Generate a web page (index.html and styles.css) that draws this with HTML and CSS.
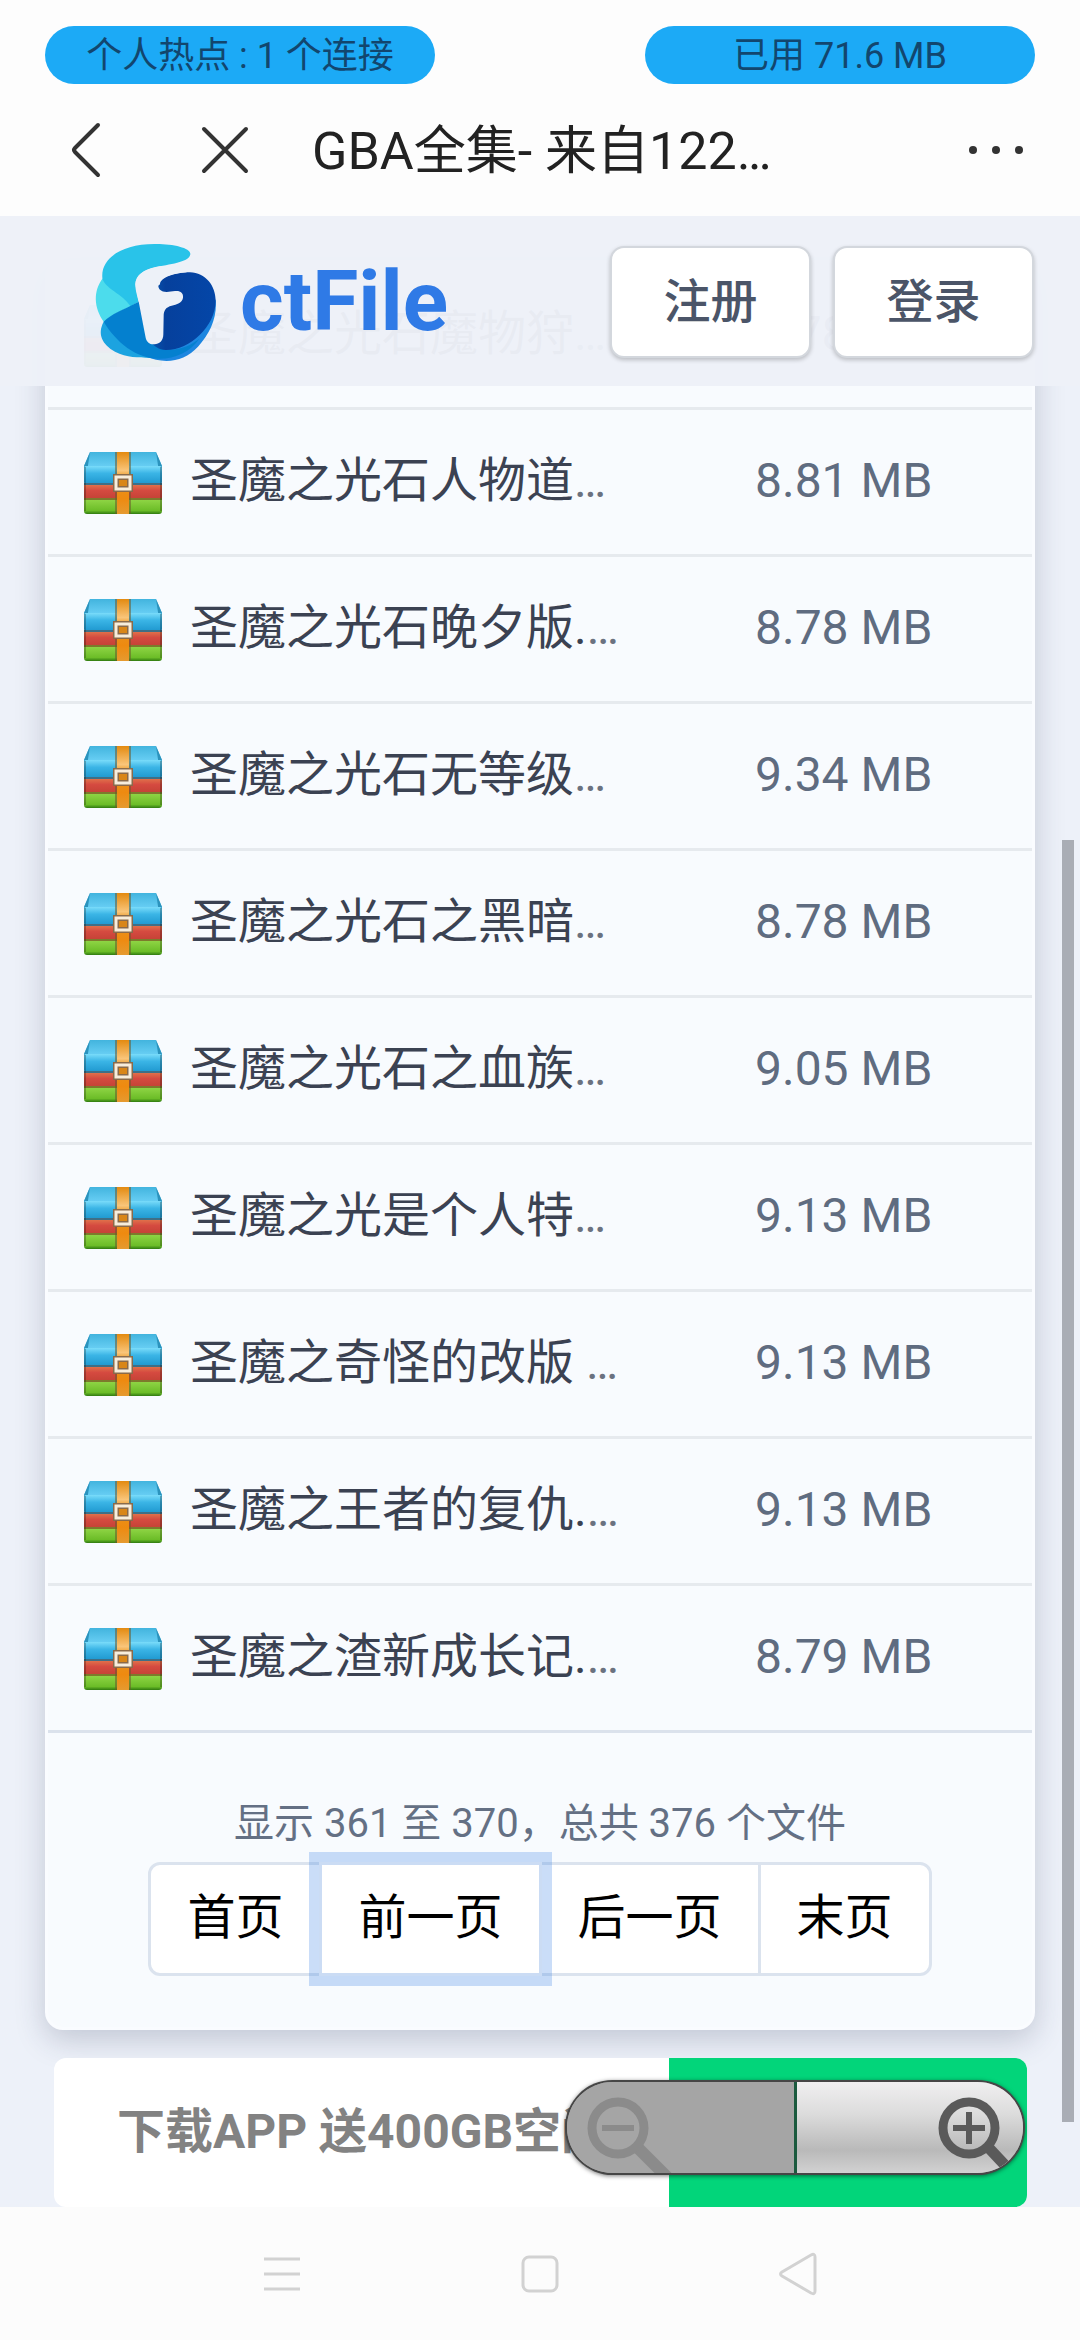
FILE: index.html
```html
<!DOCTYPE html>
<html lang="zh-CN">
<head>
    <meta charset="UTF-8">
    <meta name="viewport" content="width=device-width, initial-scale=1.0">
    <title>GBA全集</title>
    <link rel="stylesheet" href="styles.css">
</head>
<body>
    <!-- shared drawings -->
    <svg class="defs" width="0" height="0" aria-hidden="true">
        <defs>
            <linearGradient id="lid" x1="0" y1="0" x2="0" y2="1">
                <stop offset="0" stop-color="#42b4de"/>
                <stop offset="1" stop-color="#66cdf3"/>
            </linearGradient>
            <linearGradient id="blue" x1="0" y1="0" x2="0" y2="1">
                <stop offset="0" stop-color="#7adcfa"/>
                <stop offset="0.4" stop-color="#3bb5e6"/>
                <stop offset="1" stop-color="#1f98cf"/>
            </linearGradient>
            <linearGradient id="red" x1="0" y1="0" x2="0" y2="1">
                <stop offset="0" stop-color="#e0704a"/>
                <stop offset="0.4" stop-color="#d54a40"/>
                <stop offset="1" stop-color="#c44236"/>
            </linearGradient>
            <linearGradient id="green" x1="0" y1="0" x2="0" y2="1">
                <stop offset="0" stop-color="#8ed444"/>
                <stop offset="0.75" stop-color="#6cbd28"/>
                <stop offset="1" stop-color="#2f7a10"/>
            </linearGradient>
            <linearGradient id="strap" x1="0" y1="0" x2="0" y2="1">
                <stop offset="0" stop-color="#e38a10"/>
                <stop offset="0.3" stop-color="#f9c57a"/>
                <stop offset="0.42" stop-color="#e8941f"/>
                <stop offset="0.75" stop-color="#ee8a10"/>
                <stop offset="1" stop-color="#e59a30"/>
            </linearGradient>
        </defs>
        <symbol id="archive" viewBox="0 0 78 64">
            <path d="M6 1h66l6 14H0z" fill="url(#lid)"/>
            <path d="M6 1 0 15v6h3zM72 1l6 14v6h-3z" fill="#2b93bd"/>
            <rect y="15" width="78" height="18" rx="2" fill="url(#blue)"/>
            <rect y="32" width="78" height="2" fill="#3f6f86"/>
            <rect y="34" width="78" height="14" fill="url(#red)"/>
            <rect y="47" width="78" height="2" fill="#7d7a2c"/>
            <path d="M0 49h78v11q0 3-3 3H3q-3 0-3-3z" fill="url(#green)"/>
            <path d="M1 16v44M77 16v44" stroke="#000" stroke-opacity=".25" stroke-width="2"/>
            <rect x="31" y="1" width="16" height="62" fill="#6b5a2c" opacity=".55"/>
            <rect x="33" y="1" width="12" height="62" fill="url(#strap)"/>
            <rect x="32" y="26" width="14" height="12" fill="#d98618" stroke="#8a6a4a" stroke-width="6"/>
            <rect x="32" y="26" width="14" height="12" fill="none" stroke="#f7eddc" stroke-width="3"/>
        </symbol>
    </svg>

    <div class="status-bar">
        <span class="pill">个人热点 : 1 个连接</span>
        <span class="pill">已用 71.6 MB</span>
    </div>

    <div class="title-bar">
        <button class="icon-btn" type="button" aria-label="返回">
            <svg width="56" height="56" viewBox="0 0 56 56"><path d="M40 3 17 26q-2 2 0 4l23 23"/></svg>
        </button>
        <button class="icon-btn close" type="button" aria-label="关闭">
            <svg width="48" height="48" viewBox="0 0 48 48"><path d="M3 3l42 42M45 3 3 45"/></svg>
        </button>
        <h1>GBA全集- 来自122…</h1>
        <button class="icon-btn more" type="button" aria-label="更多">
            <svg width="56" height="12" viewBox="0 0 56 12"><circle cx="5" cy="6" r="4"/><circle cx="28" cy="6" r="4"/><circle cx="51" cy="6" r="4"/></svg>
        </button>
    </div>

    <main class="page">
        <header class="site-header">
            <a class="brand" href="#">
                <svg width="128" height="122" viewBox="96 60 384 366" aria-hidden="true">
                    <defs>
                        <linearGradient id="dark" x1="0" x2="1">
                            <stop offset="0" stop-color="#0767bd"/>
                            <stop offset="0.35" stop-color="#06409c"/>
                            <stop offset="1" stop-color="#0446a8"/>
                        </linearGradient>
                    </defs>
                    <path fill="#4cdcec" d="M128 172c-28 38-28 86 4 132 24-22 52-36 84-49l4-30z"/>
                    <path fill="#29c3e9" d="M127 170C122 110 190 67 290 69c50 0 102 12 101 30-1 22-51 30-101 38-42 8-64 28-64 53l10 52-24 14c-24-38-80-54-85-86z"/>
                    <path fill="#1ca3e0" d="M131 302c-20 38-4 68 34 90 36 18 70 17 105 19l20-40z"/>
                    <path fill="#1d86e0" d="M256 405c56 26 116 18 158-28 36-40 58-86 53-142l-60 70-120 60z"/>
                    <path fill="#0480cf" d="M131 302c22-24 60-36 105-60l90 143c40 2 68-14 92-32-26 38-70 60-120 60-70 0-130-50-167-111z"/>
                    <path fill="url(#dark)" d="M236 240l64-50c0-20 46-36 90-36 46 1 78 40 77 88-2 74-77 146-150 145-40-4-62-28-81-147z"/>
                    <path fill="#edf1f8" d="M226 190c2-30 30-46 74-54l60-2 20 20c-40 2-82 14-85 40 0 10 8 18 25 19l25-3c15-2 26 5 24 20s-19 20-34 24c-17 4-24 14-24 31l-1 55c0 20-12 29-27 30s-23-8-26-20l-21-108c-6-24-10-36-10-52z"/>
                </svg>
                <span>ctFile</span>
            </a>
            <nav class="account">
                <button type="button">注册</button>
                <button type="button">登录</button>
            </nav>
        </header>

        <section class="card">
            <table class="files">
                <tbody>
                    <tr><td class="ico"><svg><use href="#archive"/></svg></td><td class="name">圣魔之光石魔物狩<i>…</i></td><td class="size">8.78 MB</td></tr>
                    <tr><td class="ico"><svg><use href="#archive"/></svg></td><td class="name">圣魔之光石人物道<i>…</i></td><td class="size">8.81 MB</td></tr>
                    <tr><td class="ico"><svg><use href="#archive"/></svg></td><td class="name">圣魔之光石晚夕版.<i>…</i></td><td class="size">8.78 MB</td></tr>
                    <tr><td class="ico"><svg><use href="#archive"/></svg></td><td class="name">圣魔之光石无等级<i>…</i></td><td class="size">9.34 MB</td></tr>
                    <tr><td class="ico"><svg><use href="#archive"/></svg></td><td class="name">圣魔之光石之黑暗<i>…</i></td><td class="size">8.78 MB</td></tr>
                    <tr><td class="ico"><svg><use href="#archive"/></svg></td><td class="name">圣魔之光石之血族<i>…</i></td><td class="size">9.05 MB</td></tr>
                    <tr><td class="ico"><svg><use href="#archive"/></svg></td><td class="name">圣魔之光是个人特<i>…</i></td><td class="size">9.13 MB</td></tr>
                    <tr><td class="ico"><svg><use href="#archive"/></svg></td><td class="name">圣魔之奇怪的改版 <i>…</i></td><td class="size">9.13 MB</td></tr>
                    <tr><td class="ico"><svg><use href="#archive"/></svg></td><td class="name">圣魔之王者的复仇.<i>…</i></td><td class="size">9.13 MB</td></tr>
                    <tr><td class="ico"><svg><use href="#archive"/></svg></td><td class="name">圣魔之渣新成长记.<i>…</i></td><td class="size">8.79 MB</td></tr>
                </tbody>
            </table>
            <p class="info">显示 361 至 370，总共 376 个文件</p>
            <nav class="pagination">
                <button type="button">首页</button>
                <button type="button" class="focused">前一页</button>
                <button type="button">后一页</button>
                <button type="button">末页</button>
            </nav>
        </section>

        <section class="banner">
            <a class="banner-text" href="#">下载APP 送400GB空间</a>
            <div class="banner-action"></div>
            <div class="zoom">
                <button class="zoom-out" type="button" aria-label="缩小" disabled>
                    <svg width="110" height="91" viewBox="0 0 110 91">
                        <path d="M68 63l32 32" stroke-width="12"/>
                        <circle cx="51" cy="46" r="26" stroke-width="9"/>
                        <path d="M35 46h32" stroke-width="6"/>
                    </svg>
                </button>
                <button class="zoom-in" type="button" aria-label="放大">
                    <svg width="92" height="91" viewBox="0 0 92 91">
                        <path d="M56 64l30 32" stroke-width="11"/>
                        <circle cx="38" cy="46" r="26" stroke-width="9"/>
                        <path d="M22 46h32M38 30v32" stroke-width="6"/>
                    </svg>
                </button>
            </div>
        </section>
        <div class="scroll-thumb"></div>
    </main>

    <nav class="nav-bar">
        <button type="button" aria-label="菜单"><svg width="44" height="44" viewBox="0 0 44 44"><path d="M4 7h36M4 22h36M4 37h36"/></svg></button>
        <button type="button" aria-label="主页"><svg width="44" height="44" viewBox="0 0 44 44"><rect x="5" y="5" width="34" height="34" rx="6"/></svg></button>
        <button type="button" aria-label="后退"><svg width="44" height="44" viewBox="0 0 44 44"><path d="M35 3q4-2 4 2v34q0 4-4 2L6 24q-3-2 0-4z"/></svg></button>
    </nav>
</body>
</html>
```
FILE: styles.css
```css
* {
  box-sizing: border-box;
}

body {
  margin: 0;
  font-family: Roboto, "Noto Sans CJK SC", sans-serif;
  background: #fdfdfd;
  min-height: 100vh;
  display: flex;
  flex-direction: column;
}

button {
  font-family: inherit;
  cursor: pointer;
}

.defs {
  position: absolute;
}

/* phone status bar */
.status-bar {
  display: flex;
  justify-content: space-between;
  padding: 26px 45px 0;
}

.pill {
  width: 390px;
  height: 58px;
  border-radius: 29px;
  background: #1caaf6;
  color: #12466e;
  font-size: 36px;
  line-height: 60px;
  text-align: center;
}

/* title bar */
.title-bar {
  display: flex;
  align-items: center;
  height: 132px;
  padding: 0 56px 0 58px;
}

.title-bar h1 {
  flex: 1;
  margin: 0 0 0 63px;
  padding-top: 4px;
  font-size: 52px;
  line-height: 64px;
  font-weight: 400;
  color: #222;
}

.icon-btn {
  display: flex;
  padding: 0;
  border: none;
  background: none;
}

.icon-btn svg {
  fill: none;
  stroke: #333;
  stroke-width: 4;
  stroke-linecap: round;
}

.close {
  margin-left: 87px;
}

.more svg {
  fill: #333;
  stroke: none;
}

/* web page */
.page {
  position: relative;
  flex: 1;
  background: #edf1f9;
  overflow: hidden;
}

.site-header {
  position: relative;
  z-index: 2;
  display: flex;
  align-items: center;
  justify-content: space-between;
  height: 170px;
  padding: 2px 46px 0 92px;
  background: rgba(237, 241, 248, 0.97);
}

.brand {
  display: flex;
  align-items: center;
  gap: 20px;
  color: #2f7ae6;
  font-size: 84px;
  line-height: 100px;
  font-weight: 700;
  text-decoration: none;
}

.account {
  display: flex;
  gap: 22px;
}

.account button {
  width: 201px;
  height: 112px;
  border: 2px solid #d3d7dd;
  border-radius: 14px;
  background: #fff;
  color: #4b5568;
  font-size: 47px;
  line-height: 56px;
  font-weight: 500;
  box-shadow: 0 2px 4px rgba(0, 0, 0, 0.22);
}

.card {
  margin: -126px 45px 0;
  padding-bottom: 51px;
  border: 3px solid #fafcff;
  border-radius: 18px;
  background: #f8fbfe;
  box-shadow: 0 10px 30px rgba(40, 50, 80, 0.22);
}

.files {
  width: 100%;
  border-spacing: 0;
}

.files td {
  height: 147px;
  padding: 0;
  border-bottom: 3px solid #e6eaee;
  font-size: 48px;
  line-height: 56px;
}

.files tr:last-child td {
  border-bottom-color: #dbe2ec;
}

.files .ico {
  width: 142px;
  padding: 2px 0 0 36px;
}

.ico svg {
  display: block;
  width: 78px;
  height: 64px;
}

.files .name {
  padding-bottom: 2px;
  color: #3b4252;
  white-space: nowrap;
}

.name i {
  font-style: normal;
  color: #6b7280;
}

.files .size {
  width: 277px;
  padding-bottom: 2px;
  color: #5f6c80;
  white-space: nowrap;
}

.info {
  margin: 67px 0 14px;
  font-size: 40px;
  line-height: 48px;
  color: #647084;
  text-align: center;
}

.pagination {
  display: flex;
  justify-content: center;
}

.pagination button {
  height: 114px;
  margin-left: -3px;
  padding: 0 36px 2px;
  border: 3px solid #dbe3ee;
  background: #fff;
  color: #000;
  font-size: 48px;
  line-height: 56px;
}

.pagination button:first-child {
  margin-left: 0;
  border-radius: 12px 0 0 12px;
}

.pagination button:last-child {
  border-radius: 0 12px 12px 0;
}

.pagination .focused {
  position: relative;
  z-index: 1;
  border-color: #cbdcf4;
  box-shadow: 0 0 0 10px rgba(66, 133, 230, 0.28);
}

/* app banner */
.banner {
  position: relative;
  display: flex;
  height: 149px;
  margin: 28px 53px 0 54px;
  border-radius: 12px;
  background: #fff;
}

.banner-text {
  flex: 1;
  padding-left: 63px;
  color: #828282;
  font-size: 48px;
  line-height: 147px;
  font-weight: 700;
  text-decoration: none;
  white-space: nowrap;
}

.banner-action {
  width: 358px;
  border-radius: 0 12px 12px 0;
  background: #02d57a;
}

.zoom {
  position: absolute;
  top: 22px;
  right: 2px;
  display: flex;
  width: 460px;
  height: 95px;
  border: 2px solid rgba(30, 30, 30, 0.7);
  border-radius: 48px;
  background: #a5a5a5;
  overflow: hidden;
  box-shadow: 0 1px 4px rgba(0, 0, 0, 0.5);
}

.zoom button {
  display: flex;
  flex: 1;
  padding: 0;
  border: none;
}

.zoom svg {
  fill: none;
}

.zoom .zoom-out {
  border-right: 3px solid #1b5a3e;
  background: #a5a5a5;
}

.zoom-out svg {
  stroke: #8b8b8b;
}

.zoom-in {
  justify-content: flex-end;
  background: linear-gradient(#f0eff0 0%, #dcdcdc 35%, #b9b9b9 75%, #d2d2d2 100%);
}

.zoom-in svg {
  stroke: #5a5a5a;
}

.scroll-thumb {
  position: absolute;
  top: 624px;
  right: 6px;
  bottom: 85px;
  width: 12px;
  background: #a9adb5;
}

/* system navigation */
.nav-bar {
  display: flex;
  align-items: center;
  justify-content: center;
  gap: 214px;
  height: 133px;
  background: #fcfcfc;
}

.nav-bar button {
  display: flex;
  padding: 0;
  border: none;
  background: none;
}

.nav-bar svg {
  fill: none;
  stroke: #d2d2d2;
  stroke-width: 3;
}
```
